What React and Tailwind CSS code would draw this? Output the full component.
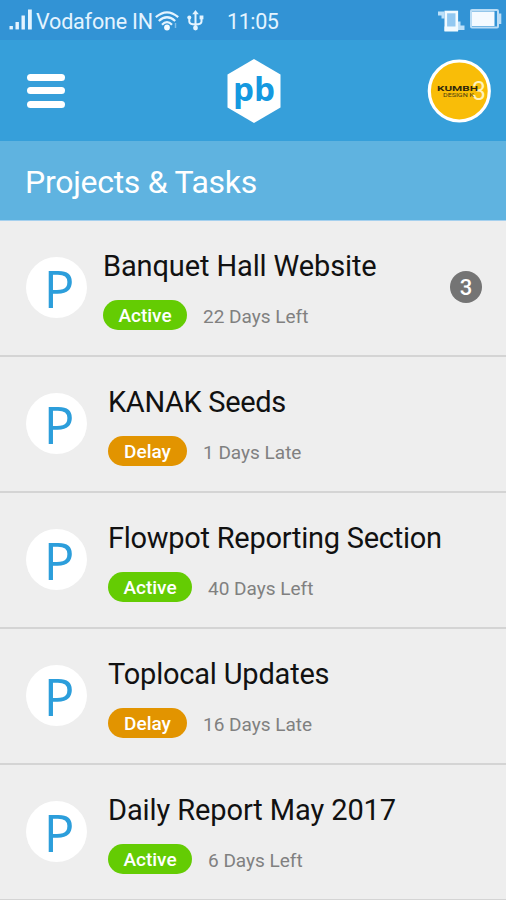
const projects = [
  { name: "Banquet Hall Website", status: "Active", due: "22 Days Left", count: 3, indent: "pl-4", tracking: "tracking-[-0.12px]" },
  { name: "KANAK Seeds", status: "Delay", due: "1 Days Late", indent: "pl-[21px]", tracking: "tracking-[-0.35px]" },
  { name: "Flowpot Reporting Section", status: "Active", due: "40 Days Left", indent: "pl-[21px]", tracking: "tracking-[-0.27px]" },
  { name: "Toplocal Updates", status: "Delay", due: "16 Days Late", indent: "pl-[21px]", tracking: "tracking-[-0.2px]" },
  { name: "Daily Report May 2017", status: "Active", due: "6 Days Left", indent: "pl-[21px]", tracking: "tracking-[-0.1px]" },
];

function SignalIcon() {
  return (
    <svg className="h-[21px] w-6 shrink-0" viewBox="0 0 24 21" fill="#e4f4ff">
      <rect x="0.5" y="17" width="3.400" height="3.400" />
      <rect x="6.5" y="13" width="3.400" height="7.400" />
      <rect x="12.5" y="6.500" width="3.400" height="14" />
      <rect x="19" y="0.500" width="3.800" height="20" />
    </svg>
  );
}

function WifiIcon() {
  return (
    <svg className="h-[22px] w-6 shrink-0" viewBox="0 0 24 22" fill="none" stroke="#e4f4ff" strokeWidth="2.200">
      <path d="M0.800 7.200Q12-2.500 23.200 7.200" />
      <path d="M3.800 11Q12 3.500 20.200 11" />
      <path d="M7 14.700Q12 9.500 17 14.700" />
      <circle cx="12" cy="17.500" r="2.900" fill="#f4fbff" stroke="none" />
      <path d="M20.500 13v5" strokeWidth="1.500" opacity="0.450" />
    </svg>
  );
}

function UsbIcon() {
  return (
    <svg className="h-[21px] w-[17px] shrink-0" viewBox="0 0 17 21" fill="none" stroke="#e4f4ff" strokeWidth="2">
      <path d="M8.500 2v15M2.300 8v3.500q0 2.800 6.200 3M14.500 8v3.500q0 2.800-6 3" />
      <path d="M8.500 0l3.300 4.300h-6.600z" fill="#e4f4ff" stroke="none" />
      <circle cx="2.300" cy="7.500" r="2" fill="#e4f4ff" stroke="none" />
      <rect x="12.600" y="5.500" width="3.800" height="3.800" fill="#e4f4ff" stroke="none" />
      <circle cx="8.500" cy="18" r="2.400" fill="#e4f4ff" stroke="none" />
    </svg>
  );
}

function VibrateIcon() {
  return (
    <svg className="h-6 w-7 shrink-0" viewBox="0 0 28 24">
      <rect x="8.800" y="3" width="11" height="18" fill="#92c8f1" stroke="#f2faff" strokeWidth="2.600" />
      <path d="M7.500 17.500h13.600v4.800H7.500z" fill="#f2faff" />
      <path d="M1 2.500h6.500v7H4.500v-3H1zM21 12.500h2.500v4H27.500v4.500H21z" fill="#d5edff" opacity="0.850" />
    </svg>
  );
}

function BatteryIcon() {
  return (
    <svg className="h-5 w-8 shrink-0" viewBox="0 0 32 20">
      <rect x="1" y="1" width="27" height="17.500" rx="1" fill="#3293d5" stroke="#b9dcf5" strokeWidth="2" />
      <rect x="2" y="2.500" width="22.500" height="14.500" fill="#f4faff" />
      <path d="M29 4.500h2.300v10.500h-2.300z" fill="#b9dcf5" />
    </svg>
  );
}

function StatusBar() {
  return (
    <div className="flex h-10 items-center bg-[#3293d5] pt-[1px] pl-[9px] text-[21.5px] leading-none text-[#e4f4ff]">
      <div className="-mt-[3px] flex"><SignalIcon /></div>
      <span className="ml-[3px] w-[119px] whitespace-nowrap pt-[3px] tracking-[-0.17px]">Vodafone IN</span>
      <div className="flex"><WifiIcon /></div>
      <div className="ml-[8px] flex"><UsbIcon /></div>
      <span className="ml-[23px] whitespace-nowrap pt-[3px] tracking-[-0.4px]">11:05</span>
      <div className="mr-[4px] ml-auto flex items-center gap-[5px]">
        <VibrateIcon />
        <div className="mb-[3px] flex"><BatteryIcon /></div>
      </div>
    </div>
  );
}

function Logo() {
  return (
    <svg className="h-16 w-[54px]" viewBox="0 0 54 64">
      <path d="M27 0l26.500 15.500v33L27 64 0.500 48.500v-33z" fill="#fff" />
      <text x="27" y="42" textAnchor="middle" textLength="42" lengthAdjust="spacingAndGlyphs" fontFamily="Open Sans, sans-serif" fontWeight="700" fontSize="32" fill="#1599e0">pb</text>
    </svg>
  );
}

function Avatar() {
  return (
    <svg className="h-16 w-16" viewBox="0 0 64 64">
      <circle cx="32.300" cy="32" r="30" fill="#f9bd08" stroke="#fff" strokeWidth="3.200" />
      <text x="45" y="41" fontFamily="Roboto, sans-serif" fontSize="26" fill="#fff2bd" textLength="14" lengthAdjust="spacingAndGlyphs">3</text>
      <text x="10" y="31.500" fontFamily="Roboto, sans-serif" fontWeight="700" fontSize="8" fill="#30280c" textLength="41" lengthAdjust="spacingAndGlyphs">KUMBH</text>
      <text x="16" y="38" fontFamily="Roboto, sans-serif" fontSize="6" fill="#473911" textLength="31" lengthAdjust="spacingAndGlyphs">DESIGN K</text>
    </svg>
  );
}

function ProjectRow({ project }) {
  const active = project.status === "Active";
  return (
    <li className="flex h-[136px] border-b-2 border-[#d4d4d4] pl-[26px]">
      <div className="mt-[36px] flex h-[61px] w-[61px] shrink-0 items-center justify-center rounded-full bg-white pl-[5px] font-['Open_Sans',sans-serif] text-[51px] leading-none text-[#2c9edb]">
        <span className="mt-[1px]">P</span>
      </div>
      <div className={project.indent}>
        <h2 className={`mt-[26px] text-[29px] leading-[38px] whitespace-nowrap text-[#111] ${project.tracking}`}>{project.name}</h2>
        <div className="mt-[15px] flex h-[30px] items-center">
          <span className={active ? "flex h-full w-[84px] items-center justify-center rounded-full bg-[#64cc03] pt-[3px] text-[19px] font-medium text-white" : "flex h-full w-[79px] items-center justify-center rounded-full bg-[#e29400] pt-[3px] text-[19px] font-medium text-white"}>{project.status}</span>
          <span className="ml-4 pt-[4px] text-[19px] whitespace-nowrap text-[#808080]">{project.due}</span>
        </div>
      </div>
      {project.count && (
        <span className="mt-[50px] mr-6 ml-auto flex h-8 w-8 items-center justify-center rounded-full bg-[#747474] pt-[1px] text-[22px] font-medium text-white">{project.count}</span>
      )}
    </li>
  );
}

export default function App() {
  return (
    <main className="h-[900px] w-[506px] overflow-hidden bg-[#eee] font-[Roboto,sans-serif]">
      <StatusBar />
      <header className="flex h-[101px] items-center bg-[#369fda] pr-[15px] pl-[27px]">
        <button className="flex w-[38px] flex-col gap-[6.5px]" aria-label="Menu">
          <span className="h-[7px] rounded-full bg-white" />
          <span className="h-[7px] rounded-full bg-white" />
          <span className="h-[7px] rounded-full bg-white" />
        </button>
        <div className="mr-auto ml-[162px] flex"><Logo /></div>
        <Avatar />
      </header>
      <div className="flex h-[79px] items-center bg-[#5fb3e0] pt-[3px] pl-[25px]">
        <h1 className="text-[32px] tracking-[-0.28px] whitespace-nowrap text-white">Projects &amp; Tasks</h1>
      </div>
      <ul className="border-t border-[#a5d0ee]">
        {projects.map((project) => <ProjectRow key={project.name} project={project} />)}
      </ul>
    </main>
  );
}
